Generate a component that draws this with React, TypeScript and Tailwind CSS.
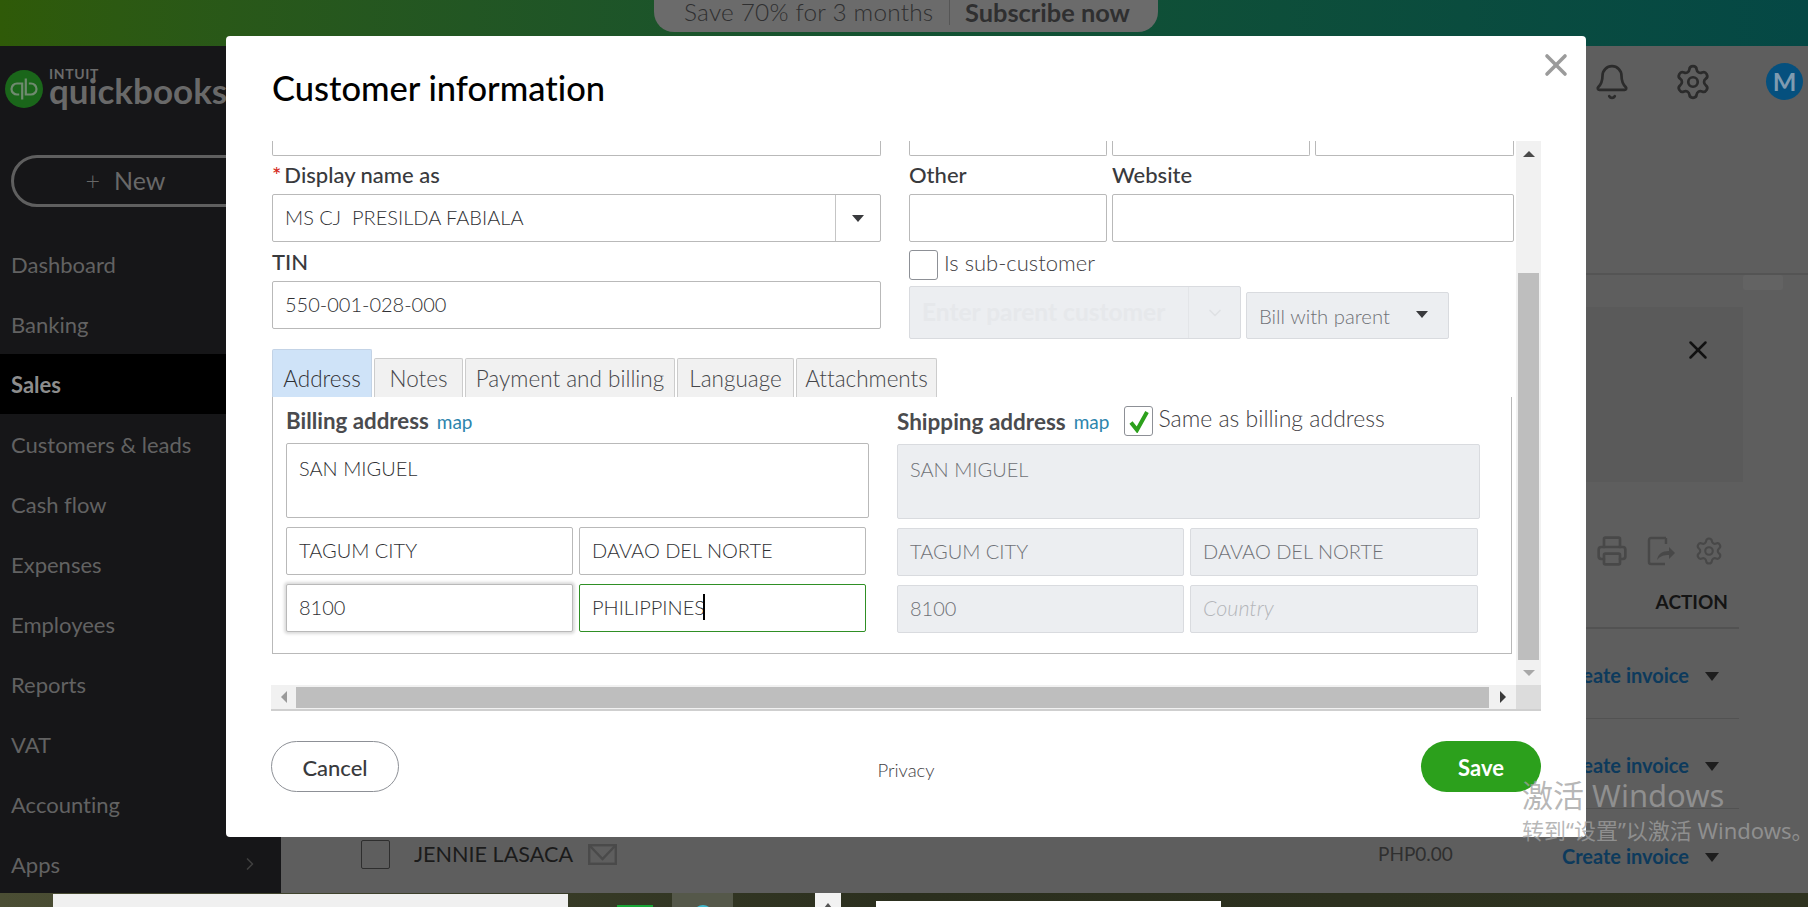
import React from "react";
import { Bell, ChevronRight, ChevronDown, Printer, Settings, X } from "lucide-react";

const NAV = ["Dashboard", "Banking", "Sales", "Customers & leads", "Cash flow", "Expenses", "Employees", "Reports", "VAT", "Accounting", "Apps"];

function Caret({ className }: { className: string }) {
  return <span className={`inline-block h-0 w-0 border-x-[6px] border-t-[7px] border-x-transparent ${className}`} />;
}

function Field({ value, className = "", disabled = false, children }: { value?: string; className?: string; disabled?: boolean; children?: React.ReactNode }) {
  return (
    <div className={`flex items-center rounded-[2px] border px-[12px] pb-[2px] text-[20px] font-light ${disabled ? "border-[#d9dbdf] bg-[#eceef1] text-[#6f7176]" : "border-[#b9b9b9] bg-white text-[#2f3033]"} ${className}`}>
      {value}
      {children}
    </div>
  );
}

function Tab({ label, className, active = false }: { label: string; className: string; active?: boolean }) {
  return (
    <div className={`flex items-center justify-center rounded-t-[2px] border border-b-0 text-[22.5px] font-light ${active ? "h-[48px] border-[#c3d3e6] bg-[#cfe3f8] pt-[11px] text-[#2f3033]" : "h-[39px] border-[#cccccc] bg-[#f1f1f1] pt-[2px] text-[#45464a]"} ${className}`}>
      {label}
    </div>
  );
}

function Check({ checked = false }: { checked?: boolean }) {
  return (
    <span className="flex h-[30px] w-[29px] shrink-0 items-center justify-center rounded-[3px] border border-[#8d9096] bg-white">
      {checked && (
        <svg width="22" height="24" viewBox="0 0 22 24" fill="none">
          <path d="M3 13.5 L9 21 L19 3" stroke="#2ca01c" strokeWidth="4" />
        </svg>
      )}
    </span>
  );
}

function InvoiceRow({ children, border = true }: { children?: React.ReactNode; border?: boolean }) {
  return (
    <div className={`flex h-[90px] shrink-0 items-center pr-[20px] pt-[3px] ${border ? "border-b border-[#525252]" : ""}`}>
      {children}
      <span className="ml-auto text-[20px] font-bold text-[#0d3a5c]">Create invoice</span>
      <Caret className="ml-[16px] mt-[3px] border-x-[7px] border-t-[9px] border-t-[#1d1d1d]" />
    </div>
  );
}

export default function App() {
  return (
    <div className="relative flex h-[907px] w-full flex-col overflow-hidden bg-[#5e5e5e] font-['Lato','Liberation_Sans',sans-serif] [font-variant-ligatures:none]">
      {/* promo banner */}
      <header className="flex h-[46px] shrink-0 justify-center bg-gradient-to-r from-[#2f5a08] via-[#135231] to-[#054845] pl-[4px]">
        <div className="flex h-[32px] w-[504px] items-center rounded-b-[20px] bg-[#6b6b6b] pb-[8px] pl-[30px] text-[#2f2f30]">
          <span className="w-[265px] text-[24.4px] font-light tracking-[0.2px]">Save 70% for 3 months</span>
          <span className="h-[26px] w-px bg-[#565656]" />
          <span className="ml-[15px] text-[25.4px] font-bold">Subscribe now</span>
        </div>
      </header>

      <div className="flex min-h-0 flex-1">
        {/* sidebar */}
        <aside className="flex w-[281px] shrink-0 flex-col bg-[#161618]">
          <div className="flex h-[109px] shrink-0 items-start pl-[5px] pt-[24px]">
            <svg width="38" height="38" viewBox="0 0 38 38" className="shrink-0">
              <circle cx="19" cy="19" r="19" fill="#1a661a" />
              <path d="M17.2 29.5V13.5H12a5.5 5.5 0 0 0 0 11h2.2 M20.8 8.5V24.5H26a5.5 5.5 0 0 0 0-11h-2.2" fill="none" stroke="#6f8a6f" strokeWidth="2.2" />
            </svg>
            <div className="ml-[6px] flex flex-col">
              <span className="-mt-[3px] h-[13px] text-[14px] font-bold leading-[13px] tracking-[0.6px] text-[#6b6b6b]">INTUIT</span>
              <span className="-mt-[12px] whitespace-nowrap text-[35px] font-bold leading-[44px] text-[#696969]">quickbooks</span>
            </div>
          </div>
          <div className="mx-[11px] flex h-[52px] shrink-0 items-center justify-center rounded-full border-[3px] border-[#5f5f5f] pr-[30px] text-[25px] text-[#686868]">
            <span className="mr-[14px] font-light">+</span>New
          </div>
          <nav className="mt-[27px] flex flex-col">
            {NAV.map((item) => (
              <div key={item} className={`flex h-[60px] items-center pl-[11px] pr-[21px] text-[22px] ${item === "Sales" ? "bg-black font-bold text-[#8d8d8d]" : "text-[#626262]"}`}>
                {item}
                {item === "Apps" && <ChevronRight className="ml-auto text-[#3f3f3f]" size={20} />}
              </div>
            ))}
          </nav>
        </aside>

        {/* page behind the dialog */}
        <main className="flex min-w-0 flex-1 flex-col overflow-hidden">
          <div className="flex h-[229px] shrink-0 items-start justify-end border-b-2 border-[#545454] pr-[5px] pt-[17px]">
            <Bell size={38} strokeWidth={1.7} className="mr-[43px] text-[#2b2b2b]" />
            <Settings size={38} strokeWidth={1.7} className="mr-[54px] text-[#2b2b2b]" />
            <span className="flex h-[37px] w-[37px] items-center justify-center rounded-full bg-[#05507e] text-[25px] font-bold text-[#7f9bb0]">M</span>
          </div>
          <div className="flex h-[15px] shrink-0 justify-end pr-[25px]">
            <div className="h-[15px] w-[40px] rounded-[2px] bg-[#636363]" />
          </div>
          <div className="ml-[24px] mr-[65px] mt-[17px] flex h-[175px] shrink-0 justify-end bg-[#5a5a5a] pr-[30px] pt-[28px]">
            <X size={30} strokeWidth={2} className="text-[#111111]" />
          </div>
          <div className="mt-[50px] flex h-[38px] shrink-0 items-center justify-end gap-[17px] pr-[84px] text-[#484848]">
            <Printer size={32} strokeWidth={2} />
            <svg width="32" height="32" viewBox="0 0 32 32" fill="none" stroke="currentColor" strokeWidth="2.4">
              <path d="M21 3H6a2 2 0 0 0-2 2v22a2 2 0 0 0 2 2h14 M21 3v6 M24 29" />
              <path d="M12 25c1-6 5-9 12-9v-4l6 6-6 6v-4c-5 0-9 1-12 5z" fill="#484848" stroke="none" />
            </svg>
            <Settings size={30} strokeWidth={1.7} />
          </div>
          <div className="ml-[80px] mr-[69px] flex min-h-0 flex-1 flex-col">
            <div className="mt-[13px] flex h-[46px] shrink-0 items-center justify-end border-b-2 border-[#525252] pb-[5px] pr-[11px] text-[19px] font-bold text-[#141414]">ACTION</div>
            <InvoiceRow />
            <InvoiceRow />
            <InvoiceRow border={false}>
              <div className="mb-[2px] flex items-center">
                <span className="h-[29px] w-[29px] rounded-[2px] border border-[#2e2e2e]" />
                <span className="ml-[24px] text-[21.6px] text-[#1b1b1b]">JENNIE LASACA</span>
                <svg width="29" height="21" viewBox="0 0 29 21" fill="none" stroke="#4a4a4a" strokeWidth="2.4" className="ml-[15px]">
                  <rect x="1.2" y="1.2" width="26.6" height="18.6" />
                  <path d="M2 2l12.5 13L27 2" />
                </svg>
                <span className="ml-[761px] text-[19px] text-[#2f2f2f]">PHP0.00</span>
              </div>
            </InvoiceRow>
          </div>
        </main>
      </div>

      {/* windows taskbar */}
      <footer className="flex h-[14px] shrink-0 items-start overflow-hidden bg-gradient-to-r from-[#4b4e34] via-[#2b2f1e] to-[#2f3320]">
        <div className="ml-[53px] mt-[1px] h-[13px] w-[515px] bg-[#f0f0f0]" />
        <div className="ml-[49px] mt-[12px] h-[2px] w-[36px] bg-[#17a535]" />
        <div className="ml-[19px] flex h-[14px] w-[61px] justify-center bg-[#55584a] pt-[12px]">
          <span className="h-[10px] w-[20px] rounded-t-full bg-[#3fb7cc]" />
        </div>
        <div className="ml-[82px] flex h-[14px] w-[26px] justify-center bg-[#f2f2f2] pt-[10px]">
          <span className="h-0 w-0 border-x-[4px] border-b-[5px] border-x-transparent border-b-[#555555]" />
        </div>
        <div className="ml-[35px] mt-[8px] h-[6px] w-[345px] bg-white" />
        <span className="ml-auto mr-[8px] mt-[10px] text-[20px] leading-[24px] text-white">1:56 AM</span>
      </footer>

      {/* dialog */}
      <section className="absolute left-[226px] top-[36px] flex h-[801px] w-[1360px] flex-col rounded-[4px] bg-white px-[45px] text-[#393a3d]">
        <div className="flex h-[105px] shrink-0 items-start justify-between">
          <h1 className="ml-[1px] mt-[30px] text-[34.5px] font-medium leading-[44px] text-black">Customer information</h1>
          <X size={36} strokeWidth={2.4} className="-mr-[33px] mt-[11px] text-[#9b9b9b]" />
        </div>

        <div className="flex h-[544px] shrink-0">
          <div className="w-[1245px] shrink-0 overflow-hidden pl-[1px]">
            <div className="flex">
              <div className="w-[609px] shrink-0">
                <div className="h-[15px] rounded-b-[2px] border-x border-b border-[#b9b9b9]" />
                <div className="flex h-[38px] items-center pb-[2px] text-[22px] font-medium">
                  <span className="mr-[3px] text-[#d52b1e]">*</span>Display name as
                </div>
                <Field value="MS CJ  PRESILDA FABIALA" className="h-[48px] whitespace-pre !pr-0">
                  <span className="-mb-[2px] ml-auto flex h-[46px] w-[45px] items-center justify-center border-l border-[#c5c5c5]">
                    <Caret className="border-t-[#393a3d]" />
                  </span>
                </Field>
                <div className="flex h-[39px] items-center text-[22px] font-medium">TIN</div>
                <Field value="550-001-028-000" className="h-[48px]" />
              </div>
              <div className="ml-[28px] w-[605px] shrink-0">
                <div className="flex gap-[5px]">
                  <div className="h-[15px] w-[198px] rounded-b-[2px] border-x border-b border-[#b9b9b9]" />
                  <div className="h-[15px] w-[198px] rounded-b-[2px] border-x border-b border-[#b9b9b9]" />
                  <div className="h-[15px] w-[199px] rounded-b-[2px] border-x border-b border-[#b9b9b9]" />
                </div>
                <div className="flex h-[38px] items-center pb-[2px] text-[22px] font-medium">
                  <span className="w-[203px]">Other</span>
                  <span>Website</span>
                </div>
                <div className="flex gap-[5px]">
                  <Field className="h-[48px] w-[198px]" />
                  <Field className="h-[48px] flex-1" />
                </div>
                <div className="mt-[8px] flex h-[30px] items-center">
                  <Check />
                  <span className="ml-[6px] -mt-[6px] text-[22px] font-light text-[#3f4043]">Is sub-customer</span>
                </div>
                <div className="mt-[6px] flex items-end gap-[5px]">
                  <Field value="Enter parent customer" disabled className="h-[53px] w-[332px] whitespace-nowrap !pb-0 !pr-0 !text-[24.5px] !font-bold !text-[#e6e8eb]">
                    <span className="ml-auto flex h-full w-[52px] shrink-0 items-center justify-center border-l border-[#e3e5e8]">
                      <ChevronDown size={20} className="text-[#dfe1e4]" />
                    </span>
                  </Field>
                  <Field value="Bill with parent" disabled className="h-[47px] w-[203px] justify-between pr-[20px] pt-[3px] !text-[20.3px]">
                    <Caret className="-mt-[4px] border-t-[#393a3d]" />
                  </Field>
                </div>
              </div>
            </div>

            <div className="mt-[10px] flex h-[48px] items-end gap-[2px]">
              <Tab active label="Address" className="w-[100px]" />
              <Tab label="Notes" className="w-[89px]" />
              <Tab label="Payment and billing" className="w-[210px]" />
              <Tab label="Language" className="w-[117px]" />
              <Tab label="Attachments" className="w-[141px]" />
            </div>

            <div className="flex h-[257px] w-[1240px] border-x border-b border-[#b9b9b9] pl-[13px]">
              <div className="w-[583px] shrink-0">
                <div className="flex h-[46px] items-center pt-[2px]">
                  <span className="text-[22.3px] font-bold text-[#4a4b4e]">Billing address</span>
                  <span className="ml-[8px] mt-[2px] text-[19px] text-[#2d85ad]">map</span>
                </div>
                <Field value="SAN MIGUEL" className="h-[75px] !items-start pt-[9px]" />
                <div className="mt-[9px] flex gap-[6px]">
                  <Field value="TAGUM CITY" className="h-[48px] w-[287px]" />
                  <Field value="DAVAO DEL NORTE" className="h-[48px] w-[287px]" />
                </div>
                <div className="mt-[9px] flex gap-[6px]">
                  <Field value="8100" className="h-[48px] w-[287px] shadow-[0_0_3px_2px_rgba(0,0,0,0.14)]" />
                  <Field value="PHILIPPINES" className="h-[48px] w-[287px] !border-[#2f8f25]">
                    <span className="-ml-[2px] h-[26px] w-[2px] bg-black" />
                  </Field>
                </div>
              </div>
              <div className="ml-[28px] w-[583px] shrink-0">
                <div className="flex h-[47px] items-center pt-[2px]">
                  <span className="text-[22.5px] font-bold text-[#4a4b4e]">Shipping address</span>
                  <span className="ml-[8px] mt-[2px] text-[19px] text-[#2d85ad]">map</span>
                  <span className="ml-[15px] -mt-[1px]"><Check checked /></span>
                  <span className="ml-[5px] -mt-[6px] text-[23px] font-light text-[#3f4043]">Same as billing address</span>
                </div>
                <Field value="SAN MIGUEL" disabled className="h-[75px] !items-start pt-[9px]" />
                <div className="mt-[9px] flex gap-[6px]">
                  <Field value="TAGUM CITY" disabled className="h-[48px] w-[287px]" />
                  <Field value="DAVAO DEL NORTE" disabled className="h-[48px] w-[288px]" />
                </div>
                <div className="mt-[9px] flex gap-[6px]">
                  <Field value="8100" disabled className="h-[48px] w-[287px]" />
                  <Field value="Country" disabled className="h-[48px] w-[288px] italic !text-[21.5px] !text-[#b4b6ba]" />
                </div>
              </div>
            </div>
          </div>

          {/* vertical scrollbar */}
          <div className="flex w-[25px] shrink-0 flex-col bg-[#f1f1f1]">
            <div className="flex h-[132px] justify-center pt-[10px]">
              <span className="h-0 w-0 border-x-[6px] border-b-[6px] border-x-transparent border-b-[#4a4a4a]" />
            </div>
            <div className="mx-[2px] h-[387px] bg-[#bebebe]" />
            <div className="flex flex-1 items-center justify-center pt-[1px]">
              <span className="h-0 w-0 border-x-[6px] border-t-[6px] border-x-transparent border-t-[#a8a8a8]" />
            </div>
          </div>
        </div>

        {/* horizontal scrollbar */}
        <div className="flex h-[26px] shrink-0 border-b-2 border-[#cfcfcf] bg-[#f1f1f1]">
          <div className="flex w-[25px] items-center justify-center">
            <span className="h-0 w-0 border-y-[6px] border-r-[6px] border-y-transparent border-r-[#9a9a9a]" />
          </div>
          <div className="mt-[2px] h-[21px] w-[1193px] bg-[#bebebe]" />
          <div className="flex w-[27px] items-center justify-center">
            <span className="h-0 w-0 border-y-[6px] border-l-[6px] border-y-transparent border-l-[#3a3a3a]" />
          </div>
          <div className="flex-1 bg-[#dcdcdc]" />
        </div>

        <div className="mt-[30px] flex items-start justify-between">
          <button className="flex h-[51px] w-[128px] items-center justify-center rounded-full border border-[#8d9096] bg-white pt-[2px] text-[22px] font-medium text-[#393a3d]">Cancel</button>
          <span className="mr-[8px] mt-[16px] text-[18.5px] font-light text-[#3f4043]">Privacy</span>
          <button className="flex h-[51px] w-[120px] items-center justify-center rounded-full bg-[#2ca01c] pt-[2px] text-[22px] font-bold text-white">Save</button>
        </div>
      </section>

      {/* activation watermark */}
      <div className="pointer-events-none absolute left-[1522px] top-[773px] flex flex-col font-['Noto_Sans','Noto_Sans_CJK_SC',sans-serif] text-[rgba(160,160,160,0.75)]">
        <span className="whitespace-nowrap text-[31px] leading-[44px]">激活 Windows</span>
        <span className="-mt-[4px] whitespace-nowrap text-[22px] leading-[34px]">转到“设置”以激活 Windows。</span>
      </div>
    </div>
  );
}
